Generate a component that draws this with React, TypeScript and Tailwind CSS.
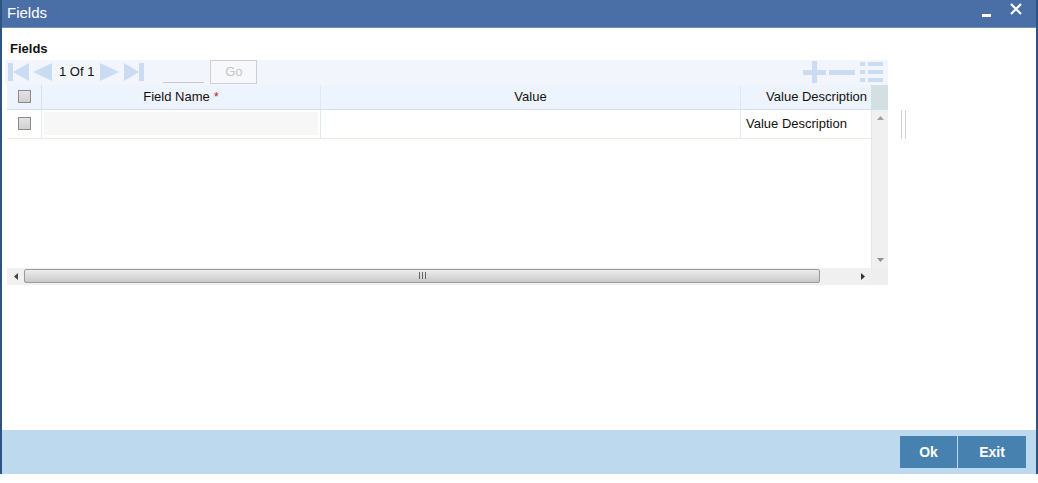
import * as React from "react";

function Check() {
  return (
    <span className="block h-[13px] w-[13px] border border-[#8a8a8a] bg-gradient-to-b from-[#e4e4e4] to-[#d0d0d0]" />
  );
}

function NavIcons() {
  const c = "#c9dcf2";
  return (
    <div className="flex items-center">
      <svg width="21" height="20" viewBox="0 0 21 20" className="ml-[3px]">
        <rect x="0" y="1" width="5" height="18" fill={c} />
        <polygon points="21,1 21,19 5,10" fill={c} />
      </svg>
      <svg width="20" height="20" viewBox="0 0 20 20" className="ml-[4px]">
        <polygon points="19,1 19,19 0,10" fill={c} />
      </svg>
      <span className="ml-[6px] text-[13px] text-[#111]">1 Of 1</span>
      <svg width="20" height="20" viewBox="0 0 20 20" className="ml-[5px]">
        <polygon points="1,1 1,19 20,10" fill={c} />
      </svg>
      <svg width="21" height="20" viewBox="0 0 21 20" className="ml-[5px]">
        <polygon points="0,1 0,19 15,10" fill={c} />
        <rect x="15" y="1" width="5" height="18" fill={c} />
      </svg>
      <span className="ml-[18px] mt-[20px] block h-px w-[41px] bg-[#c8c8c8]" />
      <button className="ml-[6px] h-[24px] w-[47px] border border-[#cfcfcf] bg-[#f6f8fb] text-[13px] text-[#c4c4c4]">
        Go
      </button>
    </div>
  );
}

function EditIcons() {
  const c = "#c9dcf2";
  return (
    <svg width="82" height="22" viewBox="0 0 82 22" className="mr-[3px]">
      <rect x="0" y="9" width="23" height="5" fill={c} />
      <rect x="9" y="0" width="5" height="22" fill={c} />
      <rect x="26" y="9" width="26" height="5" fill={c} />
      <rect x="57" y="1" width="5" height="4" fill={c} />
      <rect x="65" y="1" width="15" height="4" fill={c} />
      <rect x="57" y="9" width="5" height="4" fill={c} />
      <rect x="65" y="9" width="15" height="4" fill={c} />
      <rect x="57" y="17" width="5" height="4" fill={c} />
      <rect x="65" y="17" width="15" height="4" fill={c} />
    </svg>
  );
}

export default function App() {
  return (
    <div
      className="relative h-[483px] w-[1038px] overflow-hidden bg-white"
      style={{ fontFamily: '"Liberation Sans", Arial, sans-serif' }}
    >
      <div className="flex h-[474px] flex-col border-x-2 border-[#2d5384]">
        {/* Title bar */}
        <div className="flex h-[28px] items-center border-b border-[#6f8fbd] bg-[#4a6fa6] pl-[5px] pr-[14px]">
          <span className="text-[15px] text-white">Fields</span>
          <span className="ml-auto mt-[4px] block h-[3px] w-[9px] bg-white" />
          <svg width="12" height="12" viewBox="0 0 12 12" className="mb-[9px] ml-[19px]">
            <path d="M1 1 L11 11 M11 1 L1 11" stroke="white" strokeWidth="2.2" />
          </svg>
        </div>

        {/* Body */}
        <div className="flex-1 pl-[3px]">
          <div className="pl-[5px] pt-[11px] text-[13px] font-bold text-[#111]">Fields</div>
          <div className="mt-[1px] w-[883px]">
            {/* Toolbar */}
            <div className="flex h-[25px] items-center justify-between bg-[#f2f6fc]">
              <NavIcons />
              <EditIcons />
            </div>

            <div className="relative ml-[2px] w-[881px]">
              {/* Header */}
              <div className="flex h-[25px] border-b border-[#d3dfee] bg-[#eef4fd] text-[13px] text-[#111]">
                <div className="flex w-[35px] items-center justify-center border-r border-[#d8e2ee]">
                  <Check />
                </div>
                <div className="flex w-[279px] items-center justify-center border-r border-[#e1e8f2]">
                  Field Name <span className="ml-[4px] text-[#c0282d]">*</span>
                </div>
                <div className="flex w-[420px] items-center justify-center border-r border-[#e1e8f2]">
                  Value
                </div>
                <div className="flex w-[130px] items-center justify-end pr-[4px]">Value Description</div>
                <div className="w-[17px] bg-[#d4dfe1]" />
              </div>

              {/* Grid area */}
              <div className="flex h-[158px]">
                <div className="w-[864px]">
                  <div className="flex h-[29px] border-b border-[#f5e7dd] text-[13px] text-[#111]">
                    <div className="flex w-[35px] items-center justify-center border-r border-[#e1e8f2]">
                      <Check />
                    </div>
                    <div className="flex w-[279px] items-center border-r border-[#e1e8f2] px-[2px]">
                      <div className="h-[23px] w-full bg-[#f7f7f7]" />
                    </div>
                    <div className="w-[420px] border-r border-[#e1e8f2]" />
                    <div className="flex w-[130px] items-center pl-[5px]">Value Description</div>
                  </div>
                </div>
                {/* Vertical scrollbar */}
                <div className="flex w-[17px] flex-col items-center justify-between border-l border-[#e6e6e6] bg-[#f0f0f0] py-[6px]">
                  <svg width="7" height="4" viewBox="0 0 7 4">
                    <polygon points="0,4 7,4 3.5,0" fill="#a0a0a0" />
                  </svg>
                  <svg width="7" height="4" viewBox="0 0 7 4">
                    <polygon points="0,0 7,0 3.5,4" fill="#909090" />
                  </svg>
                </div>
              </div>

              {/* Horizontal scrollbar */}
              <div className="flex h-[17px] bg-[#f0f0f0]">
                <div className="flex w-[17px] items-center justify-center">
                  <svg width="4" height="7" viewBox="0 0 4 7">
                    <polygon points="4,0 4,7 0,3.5" fill="#444" />
                  </svg>
                </div>
                <div className="mt-[1px] flex h-[14px] w-[796px] items-center justify-center rounded-[2px] border border-[#9a9a9a] bg-gradient-to-b from-[#ececec] via-[#dcdcdc] to-[#c8c8c8]">
                  <svg width="7" height="7" viewBox="0 0 7 7">
                    <rect x="0" y="0" width="1" height="7" fill="#666" />
                    <rect x="3" y="0" width="1" height="7" fill="#666" />
                    <rect x="6" y="0" width="1" height="7" fill="#666" />
                  </svg>
                </div>
                <div className="flex w-[51px] items-center justify-end pr-[6px]">
                  <svg width="4" height="7" viewBox="0 0 4 7">
                    <polygon points="0,0 0,7 4,3.5" fill="#333" />
                  </svg>
                </div>
                <div className="w-[17px] bg-[#eeeeee]" />
              </div>

              <div className="absolute left-[894px] top-[25px] flex h-[29px] gap-[3px]">
                <span className="block w-px bg-[#d0d0d0]" />
                <span className="block w-px bg-[#d0d0d0]" />
              </div>
            </div>
          </div>
        </div>

        {/* Footer */}
        <div className="flex h-[44px] items-center justify-end bg-[#bdd9ee] pr-[10px]">
          <button className="h-[32px] w-[57px] bg-[#4781b0] text-[14px] font-bold text-white">Ok</button>
          <button className="ml-px h-[32px] w-[68px] bg-[#4781b0] text-[14px] font-bold text-white">Exit</button>
        </div>
      </div>
    </div>
  );
}
